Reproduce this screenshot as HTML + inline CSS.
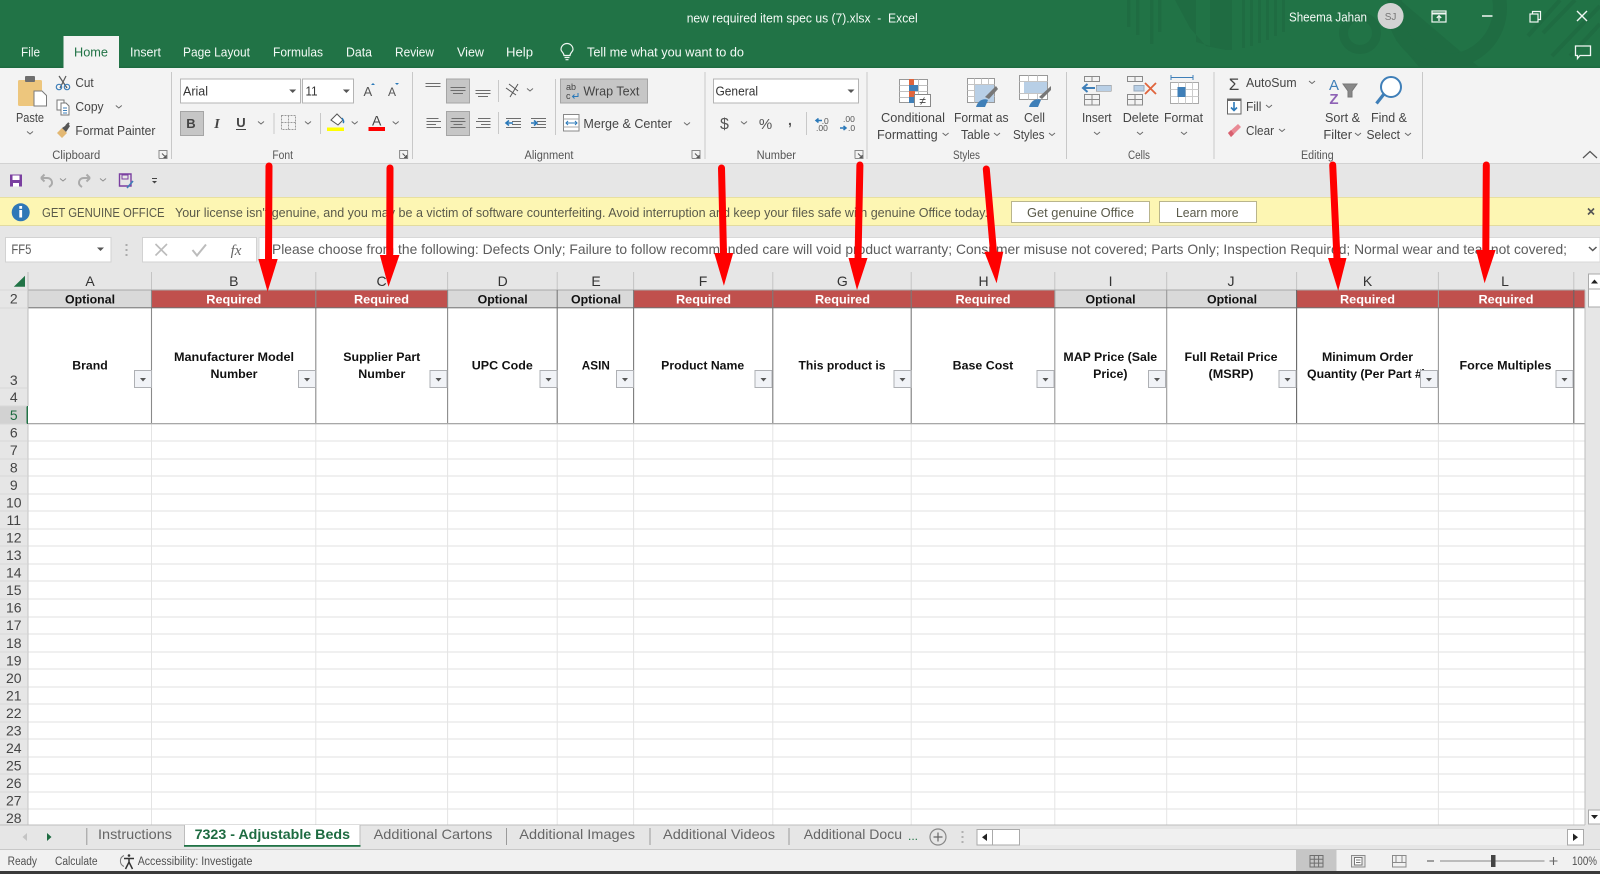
<!DOCTYPE html>
<html lang="en">
<head>
<meta charset="utf-8">
<title>new required item spec us (7).xlsx - Excel</title>
<style>
html,body{margin:0;padding:0;width:1600px;height:874px;overflow:hidden;background:#fff}
svg{display:block;filter:blur(.35px)}
text{font-family:"Liberation Sans",Arial,sans-serif;white-space:pre}
.w{fill:#f4faf6;font-size:13px}
.r{fill:#454545;font-size:13px}
.l{fill:#555;font-size:11.5px}
.b{font-size:12px;font-weight:700;fill:#111;text-anchor:middle}
.q{font-size:12px;font-weight:700;fill:#fff;text-anchor:middle}
.h{font-size:14px;fill:#333;text-anchor:middle}
.n{font-size:14px;fill:#444;text-anchor:middle}
.y{font-size:13px;fill:#5a5a4a}
.f{font-size:14px;fill:#5c5c5c}
.t{font-size:14px;fill:#666}
.s{font-size:11.5px;fill:#505050}
</style>
</head>
<body>
<svg xmlns="http://www.w3.org/2000/svg" width="1600" height="874" viewBox="0 0 1600 874">
<defs>
<path id="c" d="M-3-1.5 0 1 3-1.5" fill="none" stroke="#6a6a6a" stroke-width="1"/>
<path id="d" d="M-3.5-1.5H3.5L0 2z" fill="#555"/>
<g id="la" fill="none" stroke="#888" stroke-width="1"><path d="M-4 4V-4H4V4H-4"/><path d="M-1-1 3 3M3 .5V3H.5" stroke="#555"/></g>
<g id="fb"><rect x="0" y="0" width="17" height="17" fill="#f1f3f7" stroke="#aeb0b4"/><path d="M5.5 7.5H11.5L8.5 11z" fill="#555"/></g>
</defs>

<!-- title bar -->
<rect width="1600" height="68" fill="#217346"/>
<g fill="#1f6c42">
<rect x="1127" y="0" width="3.5" height="27"/><rect x="1136" y="0" width="3.5" height="35"/><rect x="1150" y="0" width="3.5" height="44"/><rect x="1158" y="0" width="3.5" height="32"/>
<path d="M1175 0H1196V42L1210 46V0H1232V50H1226L1206 46 1190 28z"/>
<rect x="1242" y="0" width="3" height="48"/><rect x="1250" y="0" width="3" height="46"/><rect x="1258" y="0" width="3" height="43"/><rect x="1266" y="0" width="3" height="40"/><rect x="1274" y="0" width="3" height="36"/><rect x="1282" y="0" width="3" height="32"/>
</g>
<circle cx="1360" cy="33" r="16.5" fill="none" stroke="#1f6c42" stroke-width="9"/>
<path d="M1392 0H1400L1480 68H1420L1396 40z" fill="#1f6c42"/>
<circle cx="1447" cy="8" r="53" fill="none" stroke="#1f6c42" stroke-width="14"/>
<g stroke="#1f6c42" stroke-width="4" fill="none">
<path d="M1528 36 1560 0M1543 33 1575 0M1552 56 1600 6M1570 56 1600 24"/>
</g>

<text x="686.7" y="22.5" class="w" textLength="231" lengthAdjust="spacingAndGlyphs">new required item spec us (7).xlsx  -  Excel</text>
<text x="1289" y="21.5" class="w" textLength="78" lengthAdjust="spacingAndGlyphs">Sheema Jahan</text>
<circle cx="1390.6" cy="16" r="13" fill="#d3d3d3"/>
<text x="1390.6" y="20" font-size="10" fill="#777" text-anchor="middle">SJ</text>
<g fill="none" stroke="#f2f7f4" stroke-width="1.2">
<rect x="1432" y="11" width="14" height="11"/><path d="M1432 13.5H1446" stroke-width="2"/><path d="M1439 21V16M1436.8 18 1439 15.7 1441.2 18" stroke-width="1.3"/>
<path d="M1482 16H1492.5" stroke-width="1.5"/>
<rect x="1530" y="14" width="8" height="8"/><path d="M1532.5 14V11.5H1540.5V19.5H1538"/>
<path d="M1577 11 1587 21M1587 11 1577 21" stroke-width="1.4"/>
<path d="M1575.5 46H1590.5V55.5H1580L1577.5 58.5V55.5H1575.5z" stroke-width="1.3"/>
</g>

<rect x="0" y="66.5" width="1600" height="1.5" fill="#1d6b40"/>
<rect x="63.5" y="36" width="55.5" height="32" fill="#f3f3f3"/>
<text x="21" y="56.5" class="w" textLength="19" lengthAdjust="spacingAndGlyphs">File</text>
<text x="74" y="56.5" font-size="13" fill="#217346" textLength="34" lengthAdjust="spacingAndGlyphs">Home</text>
<text x="130" y="56.5" class="w" textLength="31" lengthAdjust="spacingAndGlyphs">Insert</text>
<text x="183" y="56.5" class="w" textLength="67" lengthAdjust="spacingAndGlyphs">Page Layout</text>
<text x="273" y="56.5" class="w" textLength="50" lengthAdjust="spacingAndGlyphs">Formulas</text>
<text x="346" y="56.5" class="w" textLength="26" lengthAdjust="spacingAndGlyphs">Data</text>
<text x="395" y="56.5" class="w" textLength="39" lengthAdjust="spacingAndGlyphs">Review</text>
<text x="457" y="56.5" class="w" textLength="27" lengthAdjust="spacingAndGlyphs">View</text>
<text x="506" y="56.5" class="w" textLength="27" lengthAdjust="spacingAndGlyphs">Help</text>
<g fill="none" stroke="#eef6f1" stroke-width="1.2">
<path d="M564 55.500C564 53 561 51.500 561 49.500A6 6 0 0 1 573 49.500C573 51.500 570 53 570 55.500z"/><path d="M564.500 57.500H569.500M565.500 59.700H568.500"/>
</g>
<text x="587" y="56.5" class="w" textLength="157" lengthAdjust="spacingAndGlyphs">Tell me what you want to do</text>

<!-- ribbon -->
<rect x="0" y="68" width="1600" height="95" fill="#f3f3f3"/>
<rect x="0" y="163" width="1600" height="1" fill="#d2d2d2"/>
<g fill="#c8c8c8">
<rect x="171" y="72" width="1" height="87"/><rect x="412" y="72" width="1" height="87"/><rect x="704.5" y="72" width="1" height="87"/><rect x="866.5" y="72" width="1" height="87"/><rect x="1066" y="72" width="1" height="87"/><rect x="1213.5" y="72" width="1" height="87"/><rect x="1422" y="72" width="1" height="87"/>
<rect x="273.5" y="113" width="1" height="21"/><rect x="320" y="113" width="1" height="21"/><rect x="498" y="80" width="1" height="22"/><rect x="498" y="112" width="1" height="22"/><rect x="555" y="79" width="1" height="56"/><rect x="806" y="112" width="1" height="23"/>
</g>

<!-- clipboard -->
<rect x="18" y="80" width="24" height="26" rx="1.5" fill="#edc67d"/>
<rect x="25" y="76" width="10" height="6" rx="1" fill="#6e6e6e"/>
<path d="M34 91H42L46.5 95.5V106H34z" fill="#fff" stroke="#7a7a7a"/>
<text x="16" y="122" class="r" textLength="28" lengthAdjust="spacingAndGlyphs">Paste</text>
<use href="#c" x="30" y="133"/>
<g fill="none" stroke="#5a5a5a" stroke-width="1.2"><path d="M59 76 67 88M66 76 60 88"/></g>
<circle cx="59" cy="87" r="2.7" fill="none" stroke="#3f7fb8" stroke-width="1.2"/><circle cx="67" cy="87" r="2.7" fill="none" stroke="#3f7fb8" stroke-width="1.2"/>
<text x="75.4" y="87" class="r" textLength="18.3" lengthAdjust="spacingAndGlyphs">Cut</text>
<g fill="#fff" stroke="#777"><path d="M57 100H64V110H57z"/><path d="M61 103H66L69 106V115H61z"/></g>
<path d="M63 108H67M63 110.5H67M63 113H67" stroke="#3f7fb8"/>
<text x="75.4" y="111" class="r" textLength="28.2" lengthAdjust="spacingAndGlyphs">Copy</text>
<use href="#c" x="118.8" y="107"/>
<path d="M57 133 62 128 67 133 62 138z" fill="#e3b873"/><path d="M62 128 68 124 70 126 66 132z" fill="#555"/><path d="M66 126 69 123" stroke="#555" stroke-width="2"/>
<text x="75.4" y="135" class="r" textLength="80" lengthAdjust="spacingAndGlyphs">Format Painter</text>
<text x="52.3" y="159" class="l" textLength="48" lengthAdjust="spacingAndGlyphs">Clipboard</text>
<use href="#la" x="163" y="154.5"/>

<!-- font -->
<rect x="180.5" y="79" width="120" height="24" fill="#fff" stroke="#b4b4b4"/>
<rect x="302.5" y="79" width="51" height="24" fill="#fff" stroke="#b4b4b4"/>
<text x="183" y="95.5" font-size="13" fill="#333" textLength="25" lengthAdjust="spacingAndGlyphs">Arial</text>
<text x="305.5" y="95.5" font-size="13" fill="#333" textLength="12" lengthAdjust="spacingAndGlyphs">11</text>
<use href="#d" x="292.7" y="91"/><use href="#d" x="346.4" y="91"/>
<text x="367.8" y="96" font-size="13" fill="#555" text-anchor="middle">A</text><path d="M371 85 373 83 375 85z" fill="#2b79b9"/>
<text x="392" y="96" font-size="12" fill="#555" text-anchor="middle">A</text><path d="M395 83H399L397 85z" fill="#2b79b9"/>
<rect x="180.5" y="111.5" width="23" height="24" fill="#c6c6c6" stroke="#a5a5a5"/>
<text x="191" y="128" font-size="13" font-weight="700" fill="#444" text-anchor="middle">B</text>
<text x="217" y="128" font-size="14" font-weight="700" font-style="italic" fill="#444" text-anchor="middle" style="font-family:'Liberation Serif',serif">I</text>
<text x="241" y="127" font-size="13" font-weight="700" fill="#444" text-anchor="middle">U</text>
<rect x="236" y="129" width="10" height="1" fill="#444"/>
<use href="#c" x="261" y="123"/>
<path d="M281.5 115.5H295.5V129.5H281.5zM288.5 115.5V129.5M281.5 122.5H295.5" fill="none" stroke="#9a9a9a" stroke-dasharray="2 1"/>
<use href="#c" x="308" y="123"/>
<path d="M331 120 337 114 343 120 338 125z" fill="#fff" stroke="#555"/><path d="M342 118C344 121 344 122 343 123" stroke="#2b79b9" stroke-width="1.5" fill="none"/>
<rect x="327" y="127.5" width="17" height="3.5" fill="#ffff00"/>
<use href="#c" x="354.7" y="123"/>
<text x="376.7" y="125.5" font-size="14" fill="#444" text-anchor="middle">A</text>
<rect x="368.5" y="127" width="16.5" height="4" fill="#ff0000"/>
<use href="#c" x="395.7" y="123"/>
<text x="272.4" y="159" class="l" textLength="20.6" lengthAdjust="spacingAndGlyphs">Font</text>
<use href="#la" x="403.6" y="154.5"/>

<!-- alignment -->
<rect x="446.5" y="79" width="23" height="24" fill="#c6c6c6" stroke="#a5a5a5"/>
<rect x="446.5" y="111.5" width="23" height="24" fill="#c6c6c6" stroke="#a5a5a5"/>
<g fill="none" stroke="#6d6d6d" stroke-width="1">
<path d="M425.5 83.5H440.5M425.5 86.5H440.5"/>
<path d="M450.5 87.5H465.5M450.5 90.5H465.5M453 93.5H463"/>
<path d="M475.5 90.5H490.5M475.5 93.5H490.5M478 96.5H488"/>
<path d="M426.5 118.5H438.5M426.5 121.5H441M426.5 124.5H436M426.5 127.5H441"/>
<path d="M451.5 118.5H464.5M450.5 121.5H465.5M453.5 124.5H462.5M450.5 127.5H465.5"/>
<path d="M478 118.5H490.5M476 121.5H490.5M481 124.5H490.5M476 127.5H490.5"/>
<path d="M506 118.5H521M512 121.5H521M512 124.5H521M506 127.5H521"/>
<path d="M531 118.5H546M537 121.5H546M537 124.5H546M531 127.5H546"/>
</g>
<path d="M513 123H507M509 120.5 506 123 509 125.5" fill="none" stroke="#2b79b9" stroke-width="1.6"/>
<path d="M531 123H536M534 120.5 537 123 534 125.5" fill="none" stroke="#2b79b9" stroke-width="1.6"/>
<g fill="none" stroke="#555"><path d="M506 88 516 95M509 84 518 91M518 84 510 97"/></g>
<use href="#c" x="530" y="90"/>
<rect x="560.5" y="79" width="87" height="24" fill="#c6c6c6" stroke="#a5a5a5"/>
<text x="566" y="90" font-size="9" fill="#444">ab</text><text x="566" y="99" font-size="9" fill="#444">c</text>
<path d="M578 93V96.5H572.5M574.5 94.5 572.5 96.5 574.5 98.5" fill="none" stroke="#2b79b9"/>
<text x="583.4" y="95.5" font-size="13" fill="#444" textLength="56" lengthAdjust="spacingAndGlyphs">Wrap Text</text>
<rect x="563.5" y="114.5" width="15.5" height="16.5" fill="#fff" stroke="#888"/>
<path d="M563.5 119H579M563.5 127H579" stroke="#aaa"/><path d="M566 123H577M568 121 566 123 568 125M575 121 577 123 575 125" fill="none" stroke="#2b79b9"/>
<text x="583.4" y="128" class="r" textLength="88.6" lengthAdjust="spacingAndGlyphs">Merge &amp; Center</text>
<use href="#c" x="687" y="124"/>
<text x="524.5" y="159" class="l" textLength="49" lengthAdjust="spacingAndGlyphs">Alignment</text>
<use href="#la" x="696" y="154.5"/>

<!-- number -->
<rect x="713.5" y="79" width="145" height="24" fill="#fff" stroke="#b4b4b4"/>
<text x="715.5" y="95.5" font-size="13" fill="#333" textLength="42.5" lengthAdjust="spacingAndGlyphs">General</text>
<use href="#d" x="851" y="91"/>
<text x="724.5" y="129" font-size="16" fill="#555" text-anchor="middle">$</text>
<use href="#c" x="744" y="123"/>
<text x="765.5" y="129" font-size="15" fill="#555" text-anchor="middle">%</text>
<text x="790" y="125" font-size="14" font-weight="700" fill="#555" text-anchor="middle">,</text>
<text x="821.7" y="124" font-size="8.5" fill="#555">.0</text><text x="816" y="131" font-size="8.5" fill="#555">.00</text>
<path d="M815 119.5H821M817.5 117.5 815 119.5 817.5 121.5" fill="none" stroke="#2b79b9" stroke-width="1.5" transform="translate(1 1)"/>
<text x="843" y="122" font-size="8.5" fill="#555">.00</text><text x="848" y="131" font-size="8.5" fill="#555">.0</text>
<path d="M840 128H846M843.5 126 846 128 843.5 130" fill="none" stroke="#2b79b9" stroke-width="1.5"/>
<text x="756.6" y="159" class="l" textLength="39.4" lengthAdjust="spacingAndGlyphs">Number</text>
<use href="#la" x="859" y="154.5"/>

<!-- styles -->
<g fill="#fff" stroke="#999">
<path d="M899.5 79.5H927.5V102.5H899.5z"/>
</g>
<path d="M899.5 85.5H927.5M899.5 91.5H927.5M899.5 97.5H927.5M909.5 79.5V102.5M918.5 79.5V102.5" stroke="#c0c0c0" fill="none"/>
<rect x="909" y="79" width="5" height="6" fill="#e0643c"/><rect x="909" y="85" width="9" height="6" fill="#3f7fb8"/><rect x="909" y="91" width="6" height="6" fill="#e0643c"/><rect x="909" y="97" width="5" height="6" fill="#3f7fb8"/>
<rect x="914.5" y="94.5" width="16" height="12" fill="#fff" stroke="#888"/>
<text x="922.5" y="105" font-size="12" fill="#444" text-anchor="middle">≠</text>
<text x="881" y="122" class="r" textLength="64" lengthAdjust="spacingAndGlyphs">Conditional</text>
<text x="877" y="139" class="r" textLength="60.7" lengthAdjust="spacingAndGlyphs">Formatting</text>
<use href="#c" x="945.6" y="134.5"/>
<rect x="967.5" y="78.5" width="27" height="24" fill="#fff" stroke="#999"/>
<path d="M967.5 84.5H994.5M967.5 90.5H994.5M967.5 96.5H994.5M974.5 78.5V102.5M981.5 78.5V102.5M988.5 78.5V102.5" stroke="#c4c4c4"/>
<rect x="975" y="85" width="19" height="17" fill="#b8cfe6"/>
<path d="M996 86 998 89 989 99 985 97z" fill="#777"/>
<path d="M976 107C978 100 984 98 988 100L985 107z" fill="#3f7fb8"/>
<text x="954" y="122" class="r" textLength="54.6" lengthAdjust="spacingAndGlyphs">Format as</text>
<text x="961" y="139" class="r" textLength="29" lengthAdjust="spacingAndGlyphs">Table</text>
<use href="#c" x="997" y="134.5"/>
<rect x="1019.5" y="75.5" width="28" height="24" fill="#fff" stroke="#999"/>
<path d="M1019.5 81.5H1047.5M1019.5 93.5H1047.5M1028.5 75.5V99.5M1037.5 75.5V99.5" stroke="#c4c4c4"/>
<rect x="1024" y="82" width="23" height="11" fill="#b8cfe6"/>
<path d="M1051 86 1051 90 1042 99 1039 97z" fill="#777"/>
<path d="M1029 107C1031 100 1037 98 1041 100L1038 107z" fill="#3f7fb8"/>
<text x="1024" y="122" class="r" textLength="21" lengthAdjust="spacingAndGlyphs">Cell</text>
<text x="1013" y="139" class="r" textLength="31.5" lengthAdjust="spacingAndGlyphs">Styles</text>
<use href="#c" x="1052" y="134.5"/>
<text x="953" y="159" class="l" textLength="27" lengthAdjust="spacingAndGlyphs">Styles</text>

<!-- cells -->
<g fill="none" stroke="#8a8a8a">
<path d="M1084.5 76.5H1099.5V81.5H1084.5zM1092 76.5V81.5"/>
<path d="M1084.5 94.5H1099.5V105H1084.5zM1084.5 99.5H1099.5M1092 94.5V105"/>
<path d="M1096.5 85.5H1111V91H1096.5zM1104 85.5V91"/>
<path d="M1127.5 76.5H1142.5V81.5H1127.5zM1135 76.5V81.5"/>
<path d="M1127.5 94.5H1142.5V105H1127.5zM1127.5 99.5H1142.5M1135 94.5V105"/>
</g>
<rect x="1096.5" y="85.5" width="14.5" height="5.5" fill="#b8cfe6"/>
<path d="M1095 88H1083M1087.5 84 1083 88 1087.5 92" fill="none" stroke="#3f7fb8" stroke-width="2"/>
<rect x="1134" y="85.5" width="10" height="5.5" fill="#b8cfe6" stroke="#9ab"/>
<path d="M1145 83 1156 94M1156 83 1145 94" stroke="#e0643c" stroke-width="1.8"/>
<text x="1082" y="122" class="r" textLength="29.6" lengthAdjust="spacingAndGlyphs">Insert</text>
<use href="#c" x="1097" y="133.5"/>
<text x="1122.7" y="122" class="r" textLength="36.3" lengthAdjust="spacingAndGlyphs">Delete</text>
<use href="#c" x="1140" y="133.5"/>
<path d="M1171 77.5H1193M1171 75V80M1193 75V80M1174 77.5H1190" stroke="#3f7fb8" fill="none"/>
<rect x="1170.5" y="82.5" width="28" height="21" fill="#fff" stroke="#aaa"/>
<path d="M1170.5 89.5H1198.5M1170.5 96.5H1198.5M1178.5 82.5V103.5M1185.5 82.5V103.5M1192.5 82.5V103.5" stroke="#ccc"/>
<rect x="1177.5" y="87" width="8" height="10" fill="#3f7fb8"/>
<text x="1164" y="122" class="r" textLength="39" lengthAdjust="spacingAndGlyphs">Format</text>
<use href="#c" x="1184" y="133.5"/>
<text x="1128" y="159" class="l" textLength="22" lengthAdjust="spacingAndGlyphs">Cells</text>

<!-- editing -->
<text x="1234" y="90" font-size="17" fill="#444" text-anchor="middle">Σ</text>
<text x="1246" y="87" class="r" textLength="50.6" lengthAdjust="spacingAndGlyphs">AutoSum</text>
<use href="#c" x="1312" y="82.5"/>
<rect x="1227.5" y="99" width="13.5" height="15" fill="#fff" stroke="#666"/><path d="M1227.5 100H1241" stroke="#666" stroke-width="2"/>
<path d="M1234 102V110.5M1231 107.5 1234 110.5 1237 107.5" fill="none" stroke="#2b79b9" stroke-width="1.6"/>
<text x="1246" y="111" class="r" textLength="15.4" lengthAdjust="spacingAndGlyphs">Fill</text>
<use href="#c" x="1269" y="106.5"/>
<path d="M1228 133 1238 124 1241 127 1231 137z" fill="#e98a95"/><path d="M1228 133 1231 137 1234 134 1231 130z" fill="#d85f6e"/>
<text x="1246" y="135" class="r" textLength="28" lengthAdjust="spacingAndGlyphs">Clear</text>
<use href="#c" x="1282" y="130.5"/>
<text x="1334" y="90" font-size="15" fill="#3f7fb8" text-anchor="middle">A</text>
<text x="1334" y="104" font-size="15" font-weight="700" fill="#8e62b5" text-anchor="middle">Z</text>
<path d="M1343 84H1357L1352 91V97H1348V91z" fill="#888" stroke="#777"/>
<text x="1325" y="122" class="r" textLength="35" lengthAdjust="spacingAndGlyphs">Sort &amp;</text>
<text x="1323.4" y="139" class="r" textLength="28.6" lengthAdjust="spacingAndGlyphs">Filter</text>
<use href="#c" x="1358" y="134.5"/>
<circle cx="1391" cy="87" r="10" fill="#fff" stroke="#3f7fb8" stroke-width="2"/>
<path d="M1384 94 1376.5 103.5" stroke="#3f7fb8" stroke-width="3.2"/>
<text x="1371" y="122" class="r" textLength="36" lengthAdjust="spacingAndGlyphs">Find &amp;</text>
<text x="1366.5" y="139" class="r" textLength="33.5" lengthAdjust="spacingAndGlyphs">Select</text>
<use href="#c" x="1408" y="134.5"/>
<text x="1301" y="159" class="l" textLength="32.7" lengthAdjust="spacingAndGlyphs">Editing</text>
<path d="M1583 158 1590 151.5 1597 158" fill="none" stroke="#555" stroke-width="1.2"/>

<!-- QAT -->
<rect x="0" y="164" width="1600" height="33" fill="#e6e6e6"/>
<g fill="none">
<path d="M10 174.5H22V186.5H10z" fill="#7a3fa0"/><rect x="12.5" y="175.5" width="7" height="4.5" fill="#fff"/><rect x="13" y="183" width="6" height="3.5" fill="#fff"/>
<path d="M41 178 H47C51 178 52 181 52 183 52 185 50.5 186 49 187M41 178 44.5 174.500M41 178 44.5 181.500" stroke="#aaa" stroke-width="2"/>
<path d="M90 178H84C80 178 79 181 79 183 79 185 80.5 186 82 187M90 178 86.500 174.500M90 178 86.500 181.500" stroke="#aaa" stroke-width="2"/>
<path d="M119.500 174H131V186H119.500z" stroke="#7a3fa0" stroke-width="1.4"/><path d="M122 175H128V179H122z" stroke="#7a3fa0"/><path d="M127 188 133 181" stroke="#3f7fb8" stroke-width="1.6"/>
</g>
<use href="#c" x="63" y="180" opacity=".7"/><use href="#c" x="103" y="180" opacity=".7"/>
<path d="M152 178.500H157" stroke="#444"/><path d="M152 181H157L154.500 183.500z" fill="#444"/>

<!-- yellow bar -->
<rect x="0" y="197" width="1600" height="29" fill="#fdf6b3"/>
<rect x="0" y="197" width="1600" height="1" fill="#e8e0a0"/><rect x="0" y="225" width="1600" height="1" fill="#e2dba0"/>
<circle cx="20.700" cy="212.300" r="9" fill="#2f78b7"/>
<rect x="19.300" y="210" width="2.800" height="7.500" fill="#fff"/><rect x="19.300" y="206" width="2.800" height="2.800" fill="#fff"/>
<text x="42" y="217" class="y" textLength="122.600" lengthAdjust="spacingAndGlyphs">GET GENUINE OFFICE</text>
<text x="175" y="217" class="y" textLength="813" lengthAdjust="spacingAndGlyphs">Your license isn't genuine, and you may be a victim of software counterfeiting. Avoid interruption and keep your files safe with genuine Office today.</text>
<rect x="1011.500" y="201.500" width="138" height="21" fill="#fff" stroke="#b9b58c"/>
<text x="1027" y="217" class="y" textLength="107" lengthAdjust="spacingAndGlyphs">Get genuine Office</text>
<rect x="1159.500" y="201.500" width="97" height="21" fill="#fff" stroke="#b9b58c"/>
<text x="1176" y="217" class="y" textLength="62.500" lengthAdjust="spacingAndGlyphs">Learn more</text>
<path d="M1588 208.500 1594 214.500M1594 208.500 1588 214.500" stroke="#555" stroke-width="1.600"/>

<!-- formula bar -->
<rect x="0" y="226" width="1600" height="46" fill="#e6e6e6"/>
<rect x="5.500" y="237.500" width="105.500" height="24.500" fill="#fff" stroke="#d2d2d2"/>
<text x="11.400" y="254" class="f" textLength="20" lengthAdjust="spacingAndGlyphs">FF5</text>
<use href="#d" x="100.500" y="249"/>
<g fill="#aaa"><rect x="125.500" y="244" width="2" height="2"/><rect x="125.500" y="249" width="2" height="2"/><rect x="125.500" y="254" width="2" height="2"/></g>
<rect x="142.500" y="237.500" width="114" height="24.500" fill="#fff" stroke="#d2d2d2"/>
<path d="M155.500 244 167 255.500M167 244 155.500 255.500" stroke="#bcbcbc" stroke-width="1.600"/>
<path d="M192.500 250 197 255.500 206 244.500" fill="none" stroke="#bcbcbc" stroke-width="2"/>
<text x="236" y="255" font-size="15" font-style="italic" fill="#666" text-anchor="middle" style="font-family:'Liberation Serif',serif">fx</text>
<rect x="259" y="237.500" width="1341" height="24.500" fill="#fff" stroke="#d8d8d8"/>
<text x="272" y="254" class="f" textLength="1295" lengthAdjust="spacingAndGlyphs">Please choose from the following: Defects Only; Failure to follow recommended care will void product warranty; Consumer misuse not covered; Parts Only; Inspection Required; Normal wear and tear not covered;</text>
<path d="M1589 247 1592.700 250.500 1596.500 247" fill="none" stroke="#555" stroke-width="1.500"/>

<!-- grid -->
<rect x="0" y="272" width="1600" height="553" fill="#e6e6e6"/>
<rect x="28" y="308" width="1557" height="517" fill="#fff"/>

<!-- gridlines -->
<path d="M28 441H1585M28 459H1585M28 476H1585M28 494H1585M28 511H1585M28 529H1585M28 546H1585M28 564H1585M28 581H1585M28 599H1585M28 617H1585M28 634H1585M28 652H1585M28 669H1585M28 687H1585M28 704H1585M28 722H1585M28 739H1585M28 757H1585M28 774H1585M28 792H1585M28 809H1585" stroke="#e8e8e8" stroke-width="1.300" fill="none"/>
<path d="M151.500 424V825M315.800 424V825M447.600 424V825M557.200 424V825M633.600 424V825M772.800 424V825M911.200 424V825M1054.800 424V825M1166.700 424V825M1296.600 424V825M1438.400 424V825M1573.800 424V825" stroke="#e4e4e4" stroke-width="1" fill="none"/>

<!-- row 2 cells -->
<rect x="28" y="290" width="123.500" height="18" fill="#d9d9d9"/>
<rect x="151.500" y="290" width="296" height="18" fill="#c0504d"/>
<rect x="447.600" y="290" width="186" height="18" fill="#d9d9d9"/>
<rect x="633.600" y="290" width="421.200" height="18" fill="#c0504d"/>
<rect x="1054.800" y="290" width="241.800" height="18" fill="#d9d9d9"/>
<rect x="1296.600" y="290" width="288.400" height="18" fill="#c0504d"/>

<!-- column header separators -->
<path d="M28 272V290M151.500 272V290M315.800 272V290M447.600 272V290M557.200 272V290M633.600 272V290M772.800 272V290M911.200 272V290M1054.800 272V290M1166.700 272V290M1296.600 272V290M1438.400 272V290M1573.800 272V290" stroke="#c4c4c4" fill="none"/>
<rect x="28" y="289.500" width="1557" height="1" fill="#a8a8a8"/>
<path d="M13.800 286.700H25V275.700z" fill="#217346"/>
<text x="90" y="286" class="h">A</text>
<text x="233.800" y="286" class="h">B</text>
<text x="381.500" y="286" class="h">C</text>
<text x="502.700" y="286" class="h">D</text>
<text x="596" y="286" class="h">E</text>
<text x="703" y="286" class="h">F</text>
<text x="842.300" y="286" class="h">G</text>
<text x="983.500" y="286" class="h">H</text>
<text x="1110.600" y="286" class="h">I</text>
<text x="1231" y="286" class="h">J</text>
<text x="1367.500" y="286" class="h">K</text>
<text x="1505" y="286" class="h">L</text>

<!-- row 2 text -->
<text x="90" y="303.500" class="b" textLength="50" lengthAdjust="spacingAndGlyphs">Optional</text>
<text x="233.800" y="303.500" class="q" textLength="55" lengthAdjust="spacingAndGlyphs">Required</text>
<text x="381.500" y="303.500" class="q" textLength="55" lengthAdjust="spacingAndGlyphs">Required</text>
<text x="502.700" y="303.500" class="b" textLength="50" lengthAdjust="spacingAndGlyphs">Optional</text>
<text x="596" y="303.500" class="b" textLength="50" lengthAdjust="spacingAndGlyphs">Optional</text>
<text x="703.500" y="303.500" class="q" textLength="55" lengthAdjust="spacingAndGlyphs">Required</text>
<text x="842.500" y="303.500" class="q" textLength="55" lengthAdjust="spacingAndGlyphs">Required</text>
<text x="983" y="303.500" class="q" textLength="55" lengthAdjust="spacingAndGlyphs">Required</text>
<text x="1110.500" y="303.500" class="b" textLength="50" lengthAdjust="spacingAndGlyphs">Optional</text>
<text x="1232" y="303.500" class="b" textLength="50" lengthAdjust="spacingAndGlyphs">Optional</text>
<text x="1367.500" y="303.500" class="q" textLength="55" lengthAdjust="spacingAndGlyphs">Required</text>
<text x="1506" y="303.500" class="q" textLength="55" lengthAdjust="spacingAndGlyphs">Required</text>

<!-- header text -->
<text x="90" y="369.500" class="b" textLength="35.500" lengthAdjust="spacingAndGlyphs">Brand</text>
<text x="234" y="361" class="b" textLength="120" lengthAdjust="spacingAndGlyphs">Manufacturer Model</text>
<text x="234" y="378" class="b" textLength="47" lengthAdjust="spacingAndGlyphs">Number</text>
<text x="381.800" y="361" class="b" textLength="77" lengthAdjust="spacingAndGlyphs">Supplier Part</text>
<text x="381.800" y="378" class="b" textLength="47" lengthAdjust="spacingAndGlyphs">Number</text>
<text x="502.300" y="369.500" class="b" textLength="61" lengthAdjust="spacingAndGlyphs">UPC Code</text>
<text x="595.800" y="369.500" class="b" textLength="28" lengthAdjust="spacingAndGlyphs">ASIN</text>
<text x="702.700" y="369.500" class="b" textLength="83" lengthAdjust="spacingAndGlyphs">Product Name</text>
<text x="842" y="369.500" class="b" textLength="87" lengthAdjust="spacingAndGlyphs">This product is</text>
<text x="983" y="369.500" class="b" textLength="60.600" lengthAdjust="spacingAndGlyphs">Base Cost</text>
<text x="1110.300" y="361" class="b" textLength="93.700" lengthAdjust="spacingAndGlyphs">MAP Price (Sale</text>
<text x="1110.300" y="378" class="b" textLength="34.400" lengthAdjust="spacingAndGlyphs">Price)</text>
<text x="1231" y="361" class="b" textLength="93" lengthAdjust="spacingAndGlyphs">Full Retail Price</text>
<text x="1231" y="378" class="b" textLength="45" lengthAdjust="spacingAndGlyphs">(MSRP)</text>
<text x="1367.500" y="361" class="b" textLength="91" lengthAdjust="spacingAndGlyphs">Minimum Order</text>
<text x="1307" y="378" font-size="12" font-weight="700" fill="#111" textLength="119" lengthAdjust="spacingAndGlyphs">Quantity (Per Part #)</text>
<text x="1505.500" y="369.500" class="b" textLength="92" lengthAdjust="spacingAndGlyphs">Force Multiples</text>

<!-- header borders -->
<g fill="none" stroke-width="1.100">
<path d="M151.500 290V424M315.800 290V424M447.600 290V424" stroke="#8a8a8a"/>
<path d="M557.200 290V424M633.600 290V424M772.800 290V424M911.200 290V424" stroke="#7a7a7a"/>
<path d="M1054.800 290V424M1166.700 290V424" stroke="#999"/>
<path d="M1296.600 290V424M1573.800 290V424" stroke="#666"/>
<path d="M1438.400 290V424" stroke="#999"/>
</g>
<rect x="28" y="307.300" width="1557" height="1" fill="#707070"/>
<rect x="28" y="423" width="1557" height="1.300" fill="#a8a8a8"/>
<rect x="1584.500" y="290" width="1" height="535" fill="#bdbdbd"/>

<!-- filter buttons -->
<use href="#fb" x="134.500" y="370.500"/>
<use href="#fb" x="298.500" y="370.500"/>
<use href="#fb" x="430" y="370.500"/>
<use href="#fb" x="540" y="370.500"/>
<use href="#fb" x="616.500" y="370.500"/>
<use href="#fb" x="755" y="370.500"/>
<use href="#fb" x="894" y="370.500"/>
<use href="#fb" x="1037" y="370.500"/>
<use href="#fb" x="1148.500" y="370.500"/>
<use href="#fb" x="1279" y="370.500"/>
<use href="#fb" x="1420.500" y="370.500"/>
<use href="#fb" x="1556" y="370.500"/>

<!-- row headers -->
<rect x="0" y="406" width="27" height="18" fill="#d2d2d2"/>
<rect x="26.500" y="406" width="1.500" height="18" fill="#217346"/>
<rect x="27.500" y="272" width="1" height="134" fill="#bcbcbc"/>
<rect x="27.500" y="424" width="1" height="401" fill="#c4c4c4"/>
<path d="M0 290H27M0 308H27M0 388H27M0 406H27M0 424H27M0 441H27M0 459H27M0 476H27M0 494H27M0 511H27M0 529H27M0 546H27M0 564H27M0 581H27M0 599H27M0 617H27M0 634H27M0 652H27M0 669H27M0 687H27M0 704H27M0 722H27M0 739H27M0 757H27M0 774H27M0 792H27M0 809H27" stroke="#d8d8d8" fill="none"/>
<text x="13.800" y="303.500" class="n">2</text>
<text x="13.800" y="385" class="n">3</text>
<text x="13.800" y="402" class="n">4</text>
<text x="13.800" y="420" class="n" style="fill:#1e6b41">5</text>
<text x="13.800" y="437.500" class="n">6</text>
<text x="13.800" y="455" class="n">7</text>
<text x="13.800" y="472.500" class="n">8</text>
<text x="13.800" y="490" class="n">9</text>
<text x="13.800" y="507.500" class="n">10</text>
<text x="13.800" y="525" class="n">11</text>
<text x="13.800" y="542.500" class="n">12</text>
<text x="13.800" y="560" class="n">13</text>
<text x="13.800" y="577.500" class="n">14</text>
<text x="13.800" y="595" class="n">15</text>
<text x="13.800" y="612.500" class="n">16</text>
<text x="13.800" y="630" class="n">17</text>
<text x="13.800" y="648" class="n">18</text>
<text x="13.800" y="665.500" class="n">19</text>
<text x="13.800" y="683" class="n">20</text>
<text x="13.800" y="700.500" class="n">21</text>
<text x="13.800" y="718" class="n">22</text>
<text x="13.800" y="735.500" class="n">23</text>
<text x="13.800" y="753" class="n">24</text>
<text x="13.800" y="770.500" class="n">25</text>
<text x="13.800" y="788" class="n">26</text>
<text x="13.800" y="805.500" class="n">27</text>
<text x="13.800" y="823" class="n">28</text>

<!-- vertical scrollbar -->
<rect x="1585.500" y="272" width="14.500" height="553" fill="#e6e6e6"/>
<rect x="1588.500" y="274" width="12" height="15" fill="#fff" stroke="#aaa"/>
<path d="M1591 283.500H1598L1594.500 279.500z" fill="#222"/>
<rect x="1588.500" y="289" width="12" height="18" fill="#fff" stroke="#aaa"/>
<rect x="1588.500" y="810" width="12" height="14" fill="#fff" stroke="#aaa"/>
<path d="M1591 815H1598L1594.500 819z" fill="#222"/>

<!-- tab bar -->
<rect x="0" y="825" width="1600" height="25" fill="#e6e6e6"/>
<rect x="0" y="824.500" width="1585" height="1" fill="#bdbdbd"/>
<path d="M27 833V841L22.500 837z" fill="#c4c4c4"/>
<path d="M47 833V841L51.500 837z" fill="#1e6b41"/>
<path d="M86.800 828V845M506.500 828V845M650 828V845M789 828V845" stroke="#9a9a9a" fill="none"/>
<text x="98" y="839" class="t" textLength="74" lengthAdjust="spacingAndGlyphs">Instructions</text>
<rect x="184.500" y="825" width="175.500" height="20.500" fill="#fff"/>
<path d="M184.500 825V846M360 825V846" stroke="#bdbdbd"/>
<rect x="184" y="845" width="176.500" height="1.800" fill="#217346"/>
<text x="194.600" y="839" font-size="14" font-weight="700" fill="#1e6b41" textLength="155.400" lengthAdjust="spacingAndGlyphs">7323 - Adjustable Beds</text>
<text x="373.600" y="839" class="t" textLength="118.800" lengthAdjust="spacingAndGlyphs">Additional Cartons</text>
<text x="519.300" y="839" class="t" textLength="115.700" lengthAdjust="spacingAndGlyphs">Additional Images</text>
<text x="663" y="839" class="t" textLength="112" lengthAdjust="spacingAndGlyphs">Additional Videos</text>
<text x="803.800" y="839" class="t" textLength="98.200" lengthAdjust="spacingAndGlyphs">Additional Docu</text>
<text x="908" y="840" font-size="12" fill="#217346">...</text>
<circle cx="938" cy="837" r="8" fill="none" stroke="#888" stroke-width="1.200"/>
<path d="M933.500 837H942.500M938 832.500V841.500" stroke="#666" stroke-width="1.200"/>
<g fill="#b0b0b0"><rect x="961.500" y="831" width="2" height="2"/><rect x="961.500" y="836" width="2" height="2"/><rect x="961.500" y="841" width="2" height="2"/></g>
<rect x="976.500" y="829" width="590.500" height="16" fill="#f0f0f0"/>
<rect x="977" y="829.500" width="15.500" height="15.500" fill="#fff" stroke="#aaa"/>
<path d="M987 833.500V841L982 837.200z" fill="#222"/>
<rect x="992.500" y="829.500" width="27" height="15.500" fill="#fff" stroke="#aaa"/>
<rect x="1567.500" y="829.500" width="16" height="15.500" fill="#fff" stroke="#aaa"/>
<path d="M1573 833.500V841L1578 837.200z" fill="#222"/>
<rect x="0" y="849" width="1600" height="1" fill="#c8c8c8"/>

<!-- status bar -->
<rect x="0" y="850" width="1600" height="21" fill="#f1f1f1"/>
<text x="7.600" y="865" class="s" textLength="29.400" lengthAdjust="spacingAndGlyphs">Ready</text>
<text x="55" y="865" class="s" textLength="42.500" lengthAdjust="spacingAndGlyphs">Calculate</text>
<path d="M124 855.500A6 6 0 0 0 124 866.500" fill="none" stroke="#777"/>
<path d="M124 858.500H134M129 858V862M125.500 869 129 862 132.500 869" fill="none" stroke="#333" stroke-width="1.500"/>
<circle cx="129" cy="855.500" r="1.300" fill="#333"/>
<text x="137.700" y="865" class="s" textLength="114.700" lengthAdjust="spacingAndGlyphs">Accessibility: Investigate</text>
<rect x="1296" y="850" width="40.500" height="21" fill="#c6c6c6"/>
<path d="M1310 855.500H1323V867H1310zM1310 859.300H1323M1310 863.100H1323M1314.300 855.500V867M1318.600 855.500V867" fill="none" stroke="#6e6e6e"/>
<path d="M1351.500 855.500H1365V867H1351.500z" fill="#e6e6e6" stroke="#8a8a8a"/><path d="M1354.500 857.500H1362V865H1354.500zM1356 860H1360.500M1356 862.500H1360.500" fill="#fff" stroke="#777"/>
<path d="M1392.500 855.500H1406V867H1392.500zM1392.500 862.500H1406M1396 855.500V862.500M1402 855.500V862.500" fill="none" stroke="#8a8a8a"/>
<path d="M1427 861H1434" stroke="#666" stroke-width="1.200"/>
<rect x="1440" y="860" width="104.500" height="2" fill="#bcbcbc"/>
<rect x="1491" y="855" width="4.500" height="12" fill="#444"/>
<path d="M1549.500 861H1557.500M1553.500 857V865" stroke="#666" stroke-width="1.100"/>
<text x="1572" y="865" class="s" textLength="25" lengthAdjust="spacingAndGlyphs">100%</text>
<rect x="0" y="871" width="1600" height="3" fill="#3a3a3a"/>

<!-- red arrows -->
<g fill="#ff0000" stroke="none">
<path d="M269 166 268.500 260" stroke="#ff0000" stroke-width="7" stroke-linecap="round"/>
<path d="M258.300 259H277.700L267.600 291.700z"/>
<path d="M390 168 389.700 256" stroke="#ff0000" stroke-width="7" stroke-linecap="round"/>
<path d="M379.800 255H399.500L388.500 286.700z"/>
<path d="M721.500 168 723.500 254" stroke="#ff0000" stroke-width="7" stroke-linecap="round"/>
<path d="M714.200 253H733.200L723.900 285.700z"/>
<path d="M859.900 165 858 259" stroke="#ff0000" stroke-width="7" stroke-linecap="round"/>
<path d="M848.500 258H867.500L857 290z"/>
<path d="M986.300 169 993.500 252" stroke="#ff0000" stroke-width="7" stroke-linecap="round"/>
<path d="M984.300 251.700H1003.300L996.600 283.300z"/>
<path d="M1332.700 165 1337 259" stroke="#ff0000" stroke-width="7" stroke-linecap="round"/>
<path d="M1328 258H1346.500L1338.200 291z"/>
<path d="M1486.300 165 1485.800 251" stroke="#ff0000" stroke-width="7" stroke-linecap="round"/>
<path d="M1476 250H1495.600L1484.600 283.300z"/>
</g>
</svg>
</body>
</html>
